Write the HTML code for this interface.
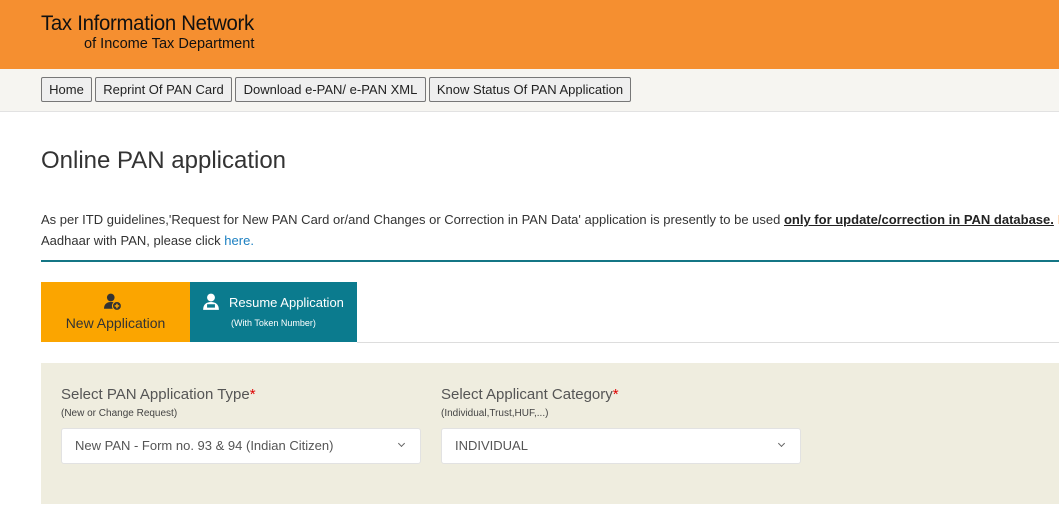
<!DOCTYPE html>
<html><head><style>
*{margin:0;padding:0;box-sizing:border-box}
body{width:1059px;height:506px;overflow:hidden;background:#fff;font-family:"Liberation Sans",sans-serif;color:#333;position:relative}
.hdr{position:absolute;left:0;top:0;width:1059px;height:69px;background:#f58f30}
.t1{position:absolute;left:41px;top:12px;font-size:21px;color:#111;letter-spacing:-0.3px;transform:scaleX(0.97);transform-origin:left}
.t2{position:absolute;left:84px;top:35px;font-size:15px;color:#111;transform:scaleX(0.97);transform-origin:left}
.nav{position:absolute;left:0;top:69px;width:1059px;height:43px;background:#f6f5f1;border-bottom:1px solid #e2e2e2}
.btn{position:absolute;top:8px;height:25px;border:1px solid #777;background:#efefef;font-size:13px;color:#222;line-height:23px;text-align:center;border-radius:2px}
h1{position:absolute;left:41px;top:147px;font-size:24px;font-weight:normal;color:#333}
.p{position:absolute;left:41px;top:209px;font-size:13px;line-height:21px;color:#333;white-space:nowrap}
.p b{text-decoration:underline;color:#222}
.line{position:absolute;left:41px;top:260px;width:1018px;height:2px;background:#147685}
.tab1{position:absolute;left:41px;top:282px;width:149px;height:60px;background:#fba500;color:#333;font-size:14px;text-align:center}
.tab2{position:absolute;left:190px;top:282px;width:167px;height:60px;background:#0b7b8e;color:#fff;font-size:13px}
.tabline{position:absolute;left:357px;top:342px;width:702px;height:1px;background:#ddd}
.panel{position:absolute;left:41px;top:363px;width:1018px;height:141px;background:#efeddf}
.lab{position:absolute;font-size:15px;color:#555}
.lab span{color:#d00}
.sub{position:absolute;font-size:10px;color:#444}
.sel{position:absolute;top:428px;height:36px;width:360px;background:#fff;border:1px solid #e2e2e2;border-radius:3px;font-size:13px;color:#555;line-height:34px;padding-left:13px}
.sel i{position:absolute;right:16px;top:12px;width:5px;height:5px;border-right:1px solid #666;border-bottom:1px solid #666;transform:rotate(45deg)}
</style></head><body>
<div class="hdr"><div class="t1">Tax Information Network</div><div class="t2">of Income Tax Department</div></div>
<div class="nav">
<div class="btn" style="left:41px;width:51px">Home</div>
<div class="btn" style="left:95px;width:137px">Reprint Of PAN Card</div>
<div class="btn" style="left:235px;width:191px">Download e-PAN/ e-PAN XML</div>
<div class="btn" style="left:429px;width:202px">Know Status Of PAN Application</div>
</div>
<h1>Online PAN application</h1>
<div class="p">As per ITD guidelines,'Request for New PAN Card or/and Changes or Correction in PAN Data' application is presently to be used <b>only for update/correction in PAN database.</b> <span style="color:#f58f30">I</span><br>Aadhaar with PAN, please click <span style="color:#1a7fc1">here.</span></div>
<div class="line"></div>
<div class="tab1">
<svg style="position:absolute;left:63px;top:11px" width="18" height="18" viewBox="0 0 16 16"><circle cx="6" cy="4" r="3.4" fill="#333"/><path d="M0 14c0-4 2.5-6 6-6s5 1 6 2v4z" fill="#333"/><circle cx="11.5" cy="11.5" r="4" fill="#333" stroke="#fba500" stroke-width="1"/><path d="M11.5 9.5v4M9.5 11.5h4" stroke="#fba500" stroke-width="1.3"/></svg>
<div style="position:absolute;left:0;width:149px;top:33px">New Application</div></div>
<div class="tab2">
<svg style="position:absolute;left:12px;top:11px" width="18" height="18" viewBox="0 0 16 16"><circle cx="8" cy="4" r="3.5" fill="#fff"/><path d="M1 15c0-5 3-7 7-7s7 2 7 7z" fill="#fff"/><rect x="4.5" y="10" width="7" height="3" fill="#0b7b8e"/></svg>
<div style="position:absolute;left:39px;top:13px;font-size:13px">Resume Application</div>
<div style="position:absolute;left:41px;top:36px;font-size:9px">(With Token Number)</div></div>
<div class="tabline"></div>
<div class="panel"></div>
<div class="lab" style="left:61px;top:386px">Select PAN Application Type<span>*</span></div>
<div class="sub" style="left:61px;top:408px">(New or Change Request)</div>
<div class="sel" style="left:61px">New PAN - Form no. 93 &amp; 94 (Indian Citizen)<i></i></div>
<div class="lab" style="left:441px;top:386px">Select Applicant Category<span>*</span></div>
<div class="sub" style="left:441px;top:408px">(Individual,Trust,HUF,...)</div>
<div class="sel" style="left:441px;width:360px">INDIVIDUAL<i></i></div>
</body></html>
